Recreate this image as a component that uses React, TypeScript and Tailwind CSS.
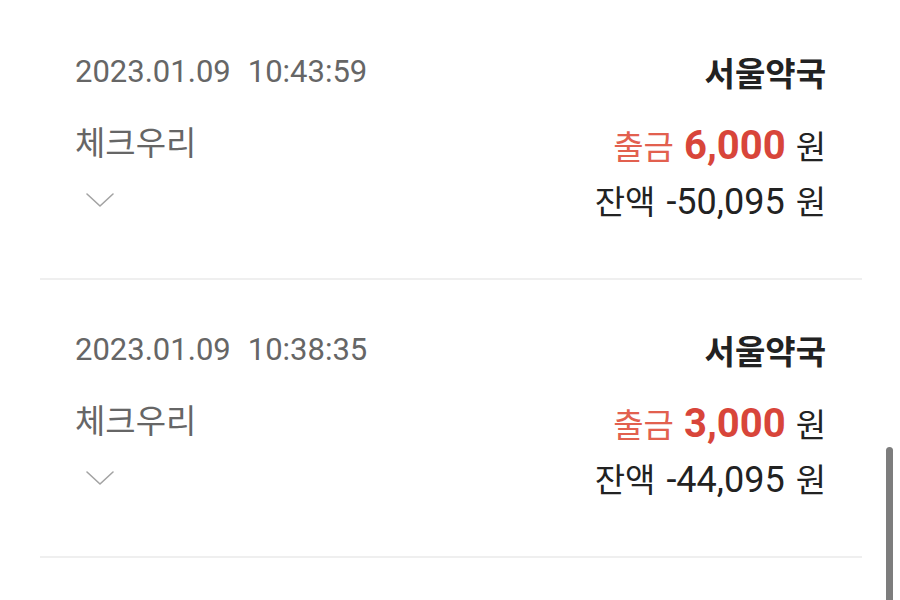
const entries = [
  {
    date: '2023.01.09',
    time: '10:43:59',
    store: '서울약국',
    account: '체크우리',
    amount: '6,000',
    balance: '-50,095',
  },
  {
    date: '2023.01.09',
    time: '10:38:35',
    store: '서울약국',
    account: '체크우리',
    amount: '3,000',
    balance: '-44,095',
  },
];

const font = "font-['Roboto','Noto_Sans_CJK_KR',sans-serif]";

function Chevron() {
  return (
    <svg width="30" height="16" viewBox="0 0 30 16" fill="none" aria-hidden="true">
      <polyline points="2,2 15,14 28,2" stroke="#a3a3a3" strokeWidth="1.6" strokeLinecap="round" strokeLinejoin="round" />
    </svg>
  );
}

function Entry({ item }: { item: (typeof entries)[number] }) {
  return (
    <div className="h-[278px] border-b-2 border-[#efefef] pl-[35px] pr-[36px] pt-[44px]">
      <div className="flex h-[52px] items-center justify-between">
        <span className="text-[31px] text-[#666666]">
          {item.date}
          <span className="ml-[17px]">{item.time}</span>
        </span>
        <span className="mt-[6px] text-[33px] font-bold text-[#222222]">{item.store}</span>
      </div>
      <div className="mt-[20px] flex h-[52px] items-center justify-between">
        <span className="text-[33px] text-[#666666]">{item.account}</span>
        <span className="mt-[4px] flex items-baseline text-[33px] text-[#222222]">
          <span className="text-[#e2604f]">출금</span>
          <span className="ml-[10px] text-[40px] font-bold text-[#d8453a]">{item.amount}</span>
          <span className="ml-[10px]">원</span>
        </span>
      </div>
      <div className="mt-[4px] flex h-[52px] items-center justify-between">
        <span className="pl-[10px]">
          <Chevron />
        </span>
        <span className="mt-[4px] flex items-baseline text-[33px] text-[#222222]">
          <span>잔액</span>
          <span className="ml-[11px] text-[36px]">{item.balance}</span>
          <span className="ml-[11px]">원</span>
        </span>
      </div>
    </div>
  );
}

export default function App() {
  return (
    <div className={`relative h-[600px] w-[900px] overflow-hidden bg-white ${font}`}>
      <div className="pl-[40px] pr-[38px] pt-[2px]">
        {entries.map((item) => (
          <Entry key={item.time} item={item} />
        ))}
      </div>
      <div className="absolute left-[886px] top-[447px] h-[200px] w-[7px] rounded-full bg-[#7d7d7d]" />
    </div>
  );
}
